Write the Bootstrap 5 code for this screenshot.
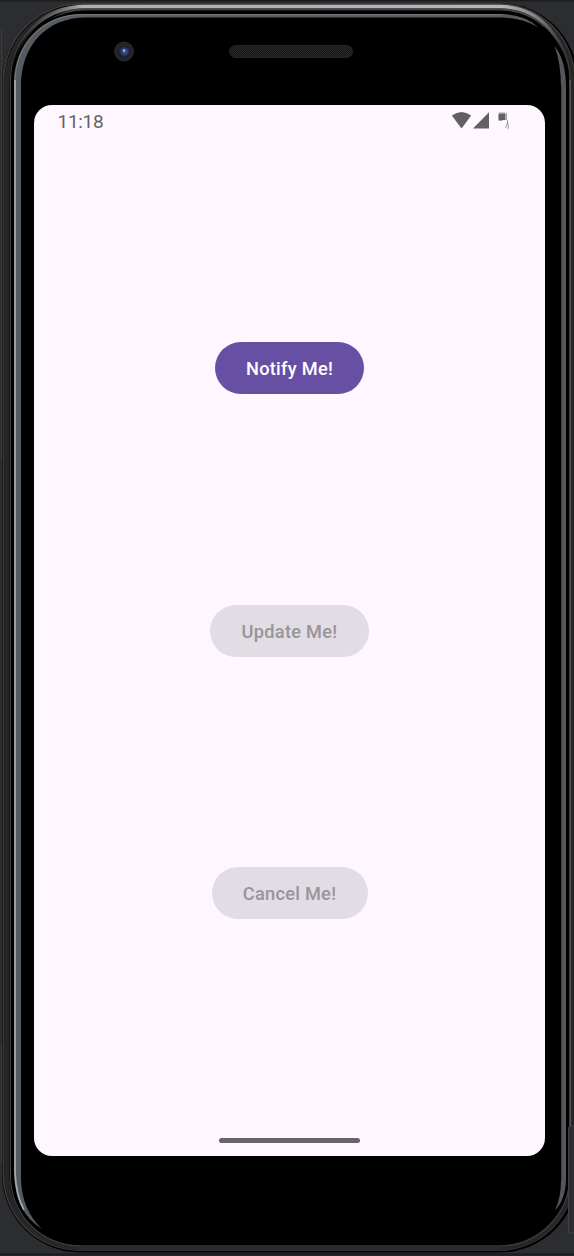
<!DOCTYPE html>
<html lang="en">
<head>
<meta charset="utf-8">
<meta name="viewport" content="width=device-width, initial-scale=1">
<title>Notify Me</title>
<link rel="stylesheet" href="https://cdn.jsdelivr.net/npm/bootstrap@5.3.0/dist/css/bootstrap.min.css">
<style>
body{background:#2b2d30;font-family:Roboto,"Liberation Sans",sans-serif}
.device{width:574px;height:1256px}
.display{width:511px;height:1051px;margin:105px 0 0 34px;border-radius:18px;background:#fef7ff}
.statusbar{height:32px;padding:0 35px 0 23.5px;color:#666368}
.clock{font-size:19px;line-height:32px;letter-spacing:-.3px;padding-top:2px}
.actions{padding-top:205px;gap:210.5px}
.btn-pill{height:52px;font-size:18.2px;font-weight:500;letter-spacing:.28px;line-height:52px;padding:1px 0 0;border:0;--bs-btn-disabled-opacity:1}
.btn-notify{width:149px;--bs-btn-color:#fff;--bs-btn-bg:#6750a4;--bs-btn-hover-color:#fff;--bs-btn-hover-bg:#5a4396}
.btn-off{--bs-btn-disabled-color:#98949b;--bs-btn-disabled-bg:#e2dce4}
.gesture{width:141px;height:5px;background:#68646a;margin-bottom:13px}
</style>
</head>
<body class="overflow-hidden">
<div class="device position-relative overflow-hidden">
  <svg class="position-absolute top-0 start-0" width="574" height="1256" viewBox="0 0 574 1256" fill="none" aria-hidden="true">
    <defs>
      <linearGradient id="topRim" x1="10" y1="0" x2="570" y2="0" gradientUnits="userSpaceOnUse">
        <stop offset="0" stop-color="#444" stop-opacity="0"/><stop offset=".05" stop-color="#555" stop-opacity=".6"/><stop offset=".13" stop-color="#b0b0b0"/>
        <stop offset=".88" stop-color="#b5b5b5"/><stop offset=".95" stop-color="#777"/><stop offset="1" stop-color="#444" stop-opacity="0"/>
      </linearGradient>
      <pattern id="mesh" width="2" height="2" patternUnits="userSpaceOnUse"><path d="M0 0h1v1H0zM1 1h1v1H1z" fill="#2e3030"/></pattern>
      <radialGradient id="lens"><stop offset="0" stop-color="#4d65a8"/><stop offset=".5" stop-color="#2c3d70"/><stop offset="1" stop-color="#151a2c"/></radialGradient>
    </defs>
    <path d="M0 .5H574M0 1254.5H574" stroke="#1c1d20" stroke-width="2"/>
    <path d="M1.500 30V460M1.500 1045V1162" stroke="#3c3d40"/>
    <!-- body and metal rim -->
    <rect x="2" y="3" width="576" height="1249.500" rx="78" fill="#000"/>
    <rect x="3.500" y="4" width="571" height="1246" rx="76" stroke="#3c3a39" stroke-width="2"/>
    <rect x="7" y="7.500" width="565" height="1240.500" rx="74" stroke="#262626" stroke-width="5"/>
    <rect x="10.500" y="9" width="559.500" height="1237" rx="70" stroke="#444"/>
    <path d="M11 90C11 38 42 6.500 86 6.500H500C540 6.500 569 38 570 90" stroke="url(#topRim)" stroke-width="3.500"/>
    <path d="M42 27Q61 9.500 86 9.500H500Q526 9.500 545 27" stroke="#444" stroke-width="2"/>
    <path d="M570 80V1175" stroke="#626262" stroke-width="1.500"/>
    <path d="M13 1170V85C13 43 45 12 86 12H500C538 12 568 44 568 85V1175" stroke="#000" stroke-width="2.500"/>
    <!-- glass edge reflections -->
    <path d="M14 1170V83C14 44 42 14 82 14H502Q525 15 538 27Q521 18 502 17.500H86C46 17.500 21 46 21 86V1180Q22 1210 42 1229Q14 1212 14 1170Z" fill="#555b60"/>
    <path d="M15 1170V83C15 44 43 14.700 82 14.700H502" stroke="#777a80"/>
    <path d="M15 80V1172Q16 1196 24 1210" stroke="#a5aaae" stroke-width="1.700"/>
    <path d="M554.500 46Q566 60 566 88V1180Q565 1201 555 1210Q561 1198 561 1180V88Q561 63 554.500 46Z" fill="#54565c"/>
    <path d="M561.500 85V1180" stroke="#3d3e43"/>
    <path d="M80 1247.500H502" stroke="#2b2b2b" stroke-width="4"/>
    <path d="M568.500 1233V1128Q568.500 1126 571 1126H575V1233Z" fill="#2b2d30" stroke="#404144"/>
    <!-- camera -->
    <circle cx="124" cy="51.500" r="10" fill="#252525"/>
    <circle cx="124.500" cy="51.500" r="6" fill="url(#lens)"/>
    <circle cx="124" cy="50.500" r="1.200" fill="#a0b2e0"/>
    <!-- speaker -->
    <rect x="229.500" y="45.500" width="123" height="12" rx="6" fill="#101111"/>
    <rect x="229.500" y="45.500" width="123" height="12" rx="6" fill="url(#mesh)" stroke="#252525"/>
  </svg>

  <main class="display position-relative d-flex flex-column align-items-center overflow-hidden">
    <header class="statusbar w-100 d-flex align-items-center justify-content-between">
      <span class="clock">11:18</span>
      <svg width="60" height="20" viewBox="450 111 60 20" fill="#636064" aria-label="Wi-Fi, signal, battery charging">
        <path d="M451.800 115.500Q461.500 108.500 471.200 115.500L461.500 128.500Z"/>
        <path d="M489 112.300V128.500H473Z"/>
        <path d="M498.500 113.500H505.500V120H498.500Z"/>
        <path d="M500 112v2M502 112v2M504 112v2M498.500 120.500h4M506.500 113v7M507.500 120v3l-2 5M507.500 122l1 5-1 2" fill="none" stroke="#89868b" stroke-width=".8"/>
      </svg>
    </header>
    <div class="actions flex-grow-1 d-flex flex-column align-items-center">
      <button type="button" class="btn rounded-pill btn-pill btn-notify">Notify Me!</button>
      <button type="button" class="btn rounded-pill btn-pill btn-off" style="width:159px" disabled>Update Me!</button>
      <button type="button" class="btn rounded-pill btn-pill btn-off" style="width:156px" disabled>Cancel Me!</button>
    </div>
    <div class="gesture rounded-pill"></div>
  </main>
</div>
<script src="https://cdn.jsdelivr.net/npm/bootstrap@5.3.0/dist/js/bootstrap.bundle.min.js"></script>
</body>
</html>
